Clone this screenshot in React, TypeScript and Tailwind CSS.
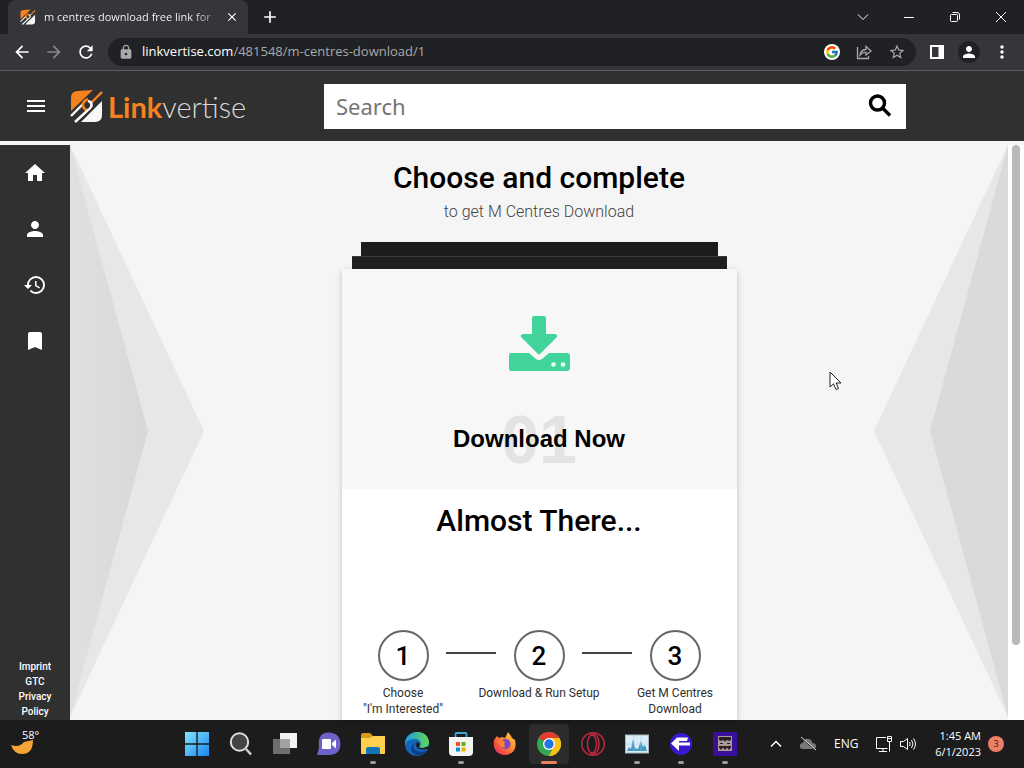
import React from 'react';
import {
  MdAdd, MdArrowBack, MdArrowForward, MdBookmark, MdClose, MdHistory, MdHome, MdLock,
  MdMenu, MdMoreVert, MdPerson, MdRefresh, MdStarBorder,
} from 'react-icons/md';
import { FcGoogle } from 'react-icons/fc';

const SIDE_LINKS = [
  { label: 'Home', Icon: MdHome },
  { label: 'Profile', Icon: MdPerson },
  { label: 'History', Icon: MdHistory },
  { label: 'Bookmarks', Icon: MdBookmark },
];

const LEGAL = ['Imprint', 'GTC', 'Privacy', 'Policy'];

const STEPS = [
  ['Choose', '"I\'m Interested"'],
  ['Download & Run Setup'],
  ['Get M Centres', 'Download'],
];

const LogoMark = ({ className }: { className?: string }) => (
  <svg viewBox="0 0 34 34" className={className} aria-hidden="true">
    <path d="M1 9 Q1 2 8 2 L23 1 L1 22 Z" fill="#f6821f" />
    <path d="M32 12 L32 26 Q32 33 25 33 L11 33 Z" fill="#f7f7f7" />
    <path d="M32 3 L20 15" stroke="#f6821f" strokeWidth="2.4" />
    <path d="M27 1 L17 10" stroke="#303030" strokeWidth="1.5" />
    <path d="M13 15 L1 27" stroke="#f7f7f7" strokeWidth="2.4" />
    <path d="M18 10 Q12 13 13 17 Q14 21 18 21" stroke="#f6821f" strokeWidth="2.6" fill="none" />
    <path d="M18 12 Q23 13 21 18 Q20 20 17 22 L5 33" stroke="#f7f7f7" strokeWidth="2.6" fill="none" />
    <path d="M23 19 L10 32" stroke="#303030" strokeWidth="1.5" />
  </svg>
);

const BrowserChrome = () => (
  <div className="shrink-0 bg-[#202124] text-white font-['Open_Sans',sans-serif]">
    <div className="flex h-[34px] items-center">
      <div className="ml-2 flex h-full w-60 items-center rounded-t-lg bg-[#35363a] pl-3 pr-2">
        <LogoMark className="h-4 w-4 shrink-0" />
        <span className="ml-2 flex-1 overflow-hidden whitespace-nowrap bg-linear-to-r from-white from-85% to-[#77787b] bg-clip-text text-[11px] text-transparent">
          m centres download free link for
        </span>
        <button aria-label="Close tab" className="ml-2 flex w-4 justify-center"><MdClose className="h-[14px] w-[14px]" /></button>
      </div>
      <button aria-label="New tab" className="ml-3"><MdAdd className="h-5 w-5" /></button>
      <div className="ml-auto flex h-7 items-center">
        <button aria-label="Search tabs" className="flex w-[46px] justify-center">
          <svg width="12" height="12" viewBox="0 0 12 12" fill="none" stroke="currentColor"><path d="M1 3.5 L6 8.5 L11 3.5" /></svg>
        </button>
        <button aria-label="Minimize" className="flex w-[46px] justify-center">
          <svg width="12" height="12" viewBox="0 0 12 12" stroke="currentColor"><path d="M1 6.5 H11" /></svg>
        </button>
        <button aria-label="Restore" className="flex w-[46px] justify-center">
          <svg width="12" height="12" viewBox="0 0 12 12" fill="none" stroke="currentColor">
            <rect x="1.5" y="3.5" width="7" height="7" rx="1" />
            <path d="M3.5 1.5 H8 Q10.5 1.5 10.5 4 V8.5" />
          </svg>
        </button>
        <button aria-label="Close" className="flex w-[46px] justify-center">
          <svg width="12" height="12" viewBox="0 0 12 12" fill="none" stroke="currentColor"><path d="M1 1 L11 11 M11 1 L1 11" /></svg>
        </button>
      </div>
    </div>
    <div className="flex h-[37px] items-center border-b border-[#5c5d60] bg-[#35363a] px-3">
      <button aria-label="Back"><MdArrowBack className="h-5 w-5" /></button>
      <button aria-label="Forward" className="ml-3 text-[#87888b]"><MdArrowForward className="h-5 w-5" /></button>
      <button aria-label="Reload" className="ml-3"><MdRefresh className="h-5 w-5" /></button>
      <div className="ml-3 flex h-7 flex-1 items-center rounded-full bg-[#202124] px-[10px] text-[#a8a9ac]">
        <MdLock className="h-4 w-4 shrink-0" />
        <span className="ml-2 flex-1 text-[13px]"><span className="text-white">linkvertise.com</span>/481548/m-centres-download/1</span>
        <span className="flex h-4 w-4 items-center justify-center rounded-full bg-white"><FcGoogle className="h-[14px] w-[14px]" /></span>
        <button aria-label="Share" className="ml-4">
          <svg width="16" height="16" viewBox="0 0 16 16" fill="none" stroke="currentColor" strokeWidth="1.3">
            <path d="M1.5 3 V14.5 H12.5 V12" />
            <path d="M4 11 Q4.500 6 10 5.500 V2.500 L15 7 L10 11 V8.500 Q6.500 8 4 11 Z" />
          </svg>
        </button>
        <button aria-label="Bookmark this page" className="ml-4"><MdStarBorder className="h-[18px] w-[18px]" /></button>
      </div>
      <button aria-label="Side panel" className="ml-[14px]">
        <svg width="14" height="14" viewBox="0 0 14 14"><path d="M1 1 H13 V13 H1 Z" fill="none" stroke="#fff" strokeWidth="2" /><path d="M8.500 1 H13 V13 H8.500 Z" fill="#fff" /></svg>
      </button>
      <button aria-label="Profile" className="ml-[14px] flex h-[22px] w-[22px] items-center justify-center rounded-full bg-[#202124]">
        <MdPerson className="h-[18px] w-[18px]" />
      </button>
      <button aria-label="Menu" className="ml-3"><MdMoreVert className="h-5 w-5" /></button>
    </div>
  </div>
);

const SiteHeader = () => (
  <header className="flex h-[70px] shrink-0 items-center bg-[#303030] pl-6">
    <button aria-label="Open navigation" className="text-white"><MdMenu className="h-6 w-6" /></button>
    <a href="#" className="ml-[22px] flex w-[254px] items-center font-['Lato',sans-serif] text-[29px] leading-8 text-[#d8d8d8]">
      <LogoMark className="mr-1 h-[34px] w-[34px]" />
      <span className="pt-[2px] font-bold text-[#f6821f]">Link</span>
      <span className="pt-[2px] font-light">vertise</span>
    </a>
    <form className="mr-[118px] flex h-[45px] flex-1 items-center bg-white" onSubmit={e => e.preventDefault()}>
      <input
        type="text"
        aria-label="Search"
        placeholder="Search"
        className="h-full min-w-0 flex-1 px-3 font-['Noto_Sans',sans-serif] text-[22px] text-black outline-none placeholder:text-[#757575]"
      />
      <button aria-label="Submit search" className="mr-[14px] text-black">
        <svg width="24" height="24" viewBox="0 0 24 24" fill="none" stroke="currentColor" strokeWidth="3.400">
          <circle cx="9.500" cy="9" r="7" />
          <path d="M14.500 14 L22 21.500" />
        </svg>
      </button>
    </form>
  </header>
);

const Sidebar = () => (
  <nav className="flex w-[70px] shrink-0 flex-col items-center bg-[#303030] pt-4 text-white">
    <div className="flex flex-col gap-8">
      {SIDE_LINKS.map(({ label, Icon }) => (
        <a key={label} href="#" aria-label={label}><Icon className="h-6 w-6" /></a>
      ))}
    </div>
    <div className="mt-auto flex flex-col items-center pb-[1px] text-[10px] font-medium leading-[15px]">
      {LEGAL.map(item => <a key={item} href="#">{item}</a>)}
    </div>
  </nav>
);

const Backdrop = () => (
  <div className="absolute inset-0 flex justify-between">
    <svg viewBox="0 0 134 575" preserveAspectRatio="none" className="h-full w-[134px]">
      <defs>
        <linearGradient id="fold" x1="0" x2="1" y1="0" y2="0">
          <stop offset="0" stopColor="#e0e0e0" />
          <stop offset="1" stopColor="#d8d8d8" />
        </linearGradient>
      </defs>
      <path d="M0 0 L134 286 L0 572 Z" fill="#e7e7e7" />
      <path d="M0 0 L78 286 L0 572 Z" fill="url(#fold)" />
    </svg>
    <svg viewBox="0 0 134 575" preserveAspectRatio="none" className="h-full w-[134px]">
      <path d="M134 0 L0 286 L134 572 Z" fill="#e7e7e7" />
      <path d="M134 0 L56 286 L134 572 Z" fill="#dadada" />
    </svg>
  </div>
);

const DownloadCard = () => (
  <div className="mt-[18px] flex w-[395px] flex-1 flex-col items-center">
    <div className="h-[14px] w-[357px] shrink-0 bg-[#1c1c1c]" />
    <div className="h-[13px] w-[375px] shrink-0 border-t border-[#3a3a3a] bg-[#1f1f1f]" />
    <div className="flex w-full flex-1 flex-col bg-white shadow-[0_2px_6px_rgba(0,0,0,0.22)]">
      <div className="flex h-[220px] flex-col items-center bg-[#f7f7f7] pt-[46px]">
        <svg width="62" height="57" viewBox="0 0 62 57" fill="#41d49b">
          <path d="M26 1 H36 Q38 1 38 3 V19 H47 Q51 20 48 23 L32 39 Q31 40 30 39 L14 23 Q11 20 15 19 H24 V3 Q24 1 26 1 Z" />
          <path d="M3 38 H21 L28 44 Q31 46 34 44 L41 38 H59 Q62 38 62 41 V53 Q62 56 59 56 H3 Q1 56 1 53 V41 Q1 38 3 38 Z" />
          <circle cx="45.500" cy="49.500" r="2.300" fill="#eafff6" />
          <circle cx="55" cy="49.500" r="2.300" fill="#eafff6" />
        </svg>
        <div className="mt-[31px] grid place-items-center font-['Liberation_Sans',sans-serif] font-bold">
          <span className="col-start-1 row-start-1 text-[68px] leading-[72px] text-[#e3e3e3]">01</span>
          <h2 className="relative col-start-1 row-start-1 text-2xl text-black">Download Now</h2>
        </div>
      </div>
      <h3 className="mt-3 text-center text-[30px] font-medium leading-10 text-black">Almost There...</h3>
      <ol className="mt-[89px] flex justify-center text-xs leading-4 text-[#303030]">
        {STEPS.map((lines, idx) => (
          <React.Fragment key={lines[0]}>
            {idx > 0 && <li aria-hidden="true" className="mt-[22px] h-[2px] w-[50px] bg-[#444]" />}
            <li className="flex w-[86px] flex-col items-center whitespace-nowrap">
              <span className="mb-1 flex h-[51px] w-[51px] items-center justify-center rounded-full border-2 border-[#666] text-[26px] font-medium text-black">
                {idx + 1}
              </span>
              {lines.map(line => <span key={line}>{line}</span>)}
            </li>
          </React.Fragment>
        ))}
      </ol>
    </div>
  </div>
);

const TASK_ICONS = [
  {
    name: 'Start',
    art: (
      <>
        <defs><linearGradient id="win" x1="0" y1="0" x2="1" y2="1"><stop stopColor="#83e4ff" /><stop offset="1" stopColor="#1688ee" /></linearGradient></defs>
        <path d="M0 0 H11.300 V11.300 H0 Z M12.700 0 H24 V11.300 H12.700 Z M0 12.700 H11.300 V24 H0 Z M12.700 12.700 H24 V24 H12.700 Z" fill="url(#win)" />
      </>
    ),
  },
  {
    name: 'Search',
    art: (
      <>
        <path d="M17 17 L22 22.500" stroke="#d0d0d0" strokeWidth="2.600" />
        <circle cx="10.500" cy="10" r="8.700" fill="#444" stroke="#dedede" strokeWidth="2" />
      </>
    ),
  },
  {
    name: 'Task view',
    art: (
      <>
        <rect x="7" y="1" width="17" height="15" fill="#f2f2f2" />
        <rect x="0" y="7" width="17" height="15" fill="#6e6e6e" />
        <rect x="7" y="7" width="10" height="9" fill="#a3a3a3" />
      </>
    ),
  },
  {
    name: 'Chat',
    art: (
      <>
        <path d="M0 23 L2 16 Q0 0 12 0.500 Q23 1 23.500 12 Q23 23 12 23 Z" fill="#6c62c7" />
        <rect x="5" y="7" width="9" height="10" rx="1" fill="#fff" />
        <path d="M15 11 L19 7.500 V16.500 L15 13 Z" fill="#fff" />
      </>
    ),
  },
  {
    name: 'File Explorer', running: true,
    art: (
      <>
        <path d="M0 3 Q0 1 2 1 H9 L12 4 H22 Q24 4 24 6 V20 H0 Z" fill="#d99a1c" />
        <path d="M0 6 H9 L12 4 H24 V21 Q24 22 23 22 H1 Q0 22 0 21 Z" fill="#ffd04d" />
        <path d="M5 22 V17 Q5 15 7 15 H17 Q19 15 19 17 V22 Z" fill="#1173b8" />
      </>
    ),
  },
  {
    name: 'Edge',
    art: (
      <>
        <defs><linearGradient id="edge" x1="0" x2="1"><stop stopColor="#2099e2" /><stop offset="1" stopColor="#61d856" /></linearGradient></defs>
        <circle cx="12" cy="12" r="12" fill="#1267bc" />
        <path d="M0 11 C1 -3 23 -4 24 10 C24 16 18 17 14 15 C18 11 14 7 10 7 C4 7 0 10 0 14 Z" fill="url(#edge)" />
        <path d="M11 10 C5 15 10 23 22 18.500 C19 23 14 24 11 23 C4 20 5 13 11 10 Z" fill="#0a3e87" />
        <path d="M12 10 C9 15 14 19 22 17 L24 17 C24 15 23 14 23 14 C19 17 14 16 14 15 C16 13 14 10 12 10 Z" fill="#1c1c1c" />
      </>
    ),
  },
  {
    name: 'Microsoft Store', running: true,
    art: (
      <>
        <path d="M6.500 6 V2 Q6.500 1 7.500 1 H16.500 Q17.500 1 17.500 2 V6" fill="none" stroke="#3ba7d9" strokeWidth="1.800" />
        <path d="M0 5 H24 V20 Q24 24 20 24 H4 Q0 24 0 20 Z" fill="#f3f3f3" />
        <path d="M7 10 H11 V14 H7 Z" fill="#f25022" /><path d="M12.500 10 H16.500 V14 H12.500 Z" fill="#6bad20" />
        <path d="M7 15.500 H11 V19.500 H7 Z" fill="#0094d8" /><path d="M12.500 15.500 H16.500 V19.500 H12.500 Z" fill="#f2ae00" />
      </>
    ),
  },
  {
    name: 'Firefox',
    art: (
      <>
        <defs><linearGradient id="fox" x1="1" y1="0" x2="0" y2="1"><stop stopColor="#ffe04a" /><stop offset=".5" stopColor="#ff7a2e" /><stop offset="1" stopColor="#e51d68" /></linearGradient></defs>
        <path d="M1 8 L4 4 L6 6 L9 5 L12 6 L15 0 L18 4 L19 6 L22 8 Q25 22 12 23 Q-1 22 1 8 Z" fill="url(#fox)" />
        <circle cx="12.500" cy="12" r="5" fill="#7747c8" />
        <path d="M5 9 L9 8 L12 10 Q10 13 13 15 Q7 17 5 9 Z" fill="#ff852d" />
      </>
    ),
  },
  {
    name: 'Chrome', active: true,
    art: (
      <>
        <circle cx="12" cy="12" r="12" fill="#34a853" />
        <path d="M12 12 L1.600 6 A12 12 0 0 1 22.400 6 Z" fill="#e53b30" />
        <path d="M12 12 L22.400 6 A12 12 0 0 1 12 24 L17 14 Z" fill="#fbc116" />
        <path d="M12 6 H22.400 L17 14 Z" fill="#fbc116" />
        <circle cx="12" cy="12" r="6" fill="#fff" /><circle cx="12" cy="12" r="4.700" fill="#2376e5" />
      </>
    ),
  },
  {
    name: 'Opera',
    art: (
      <g fill="none" stroke="#c22745">
        <circle cx="12" cy="12" r="11.300" strokeWidth="1.400" />
        <ellipse cx="11" cy="12" rx="4.500" ry="9" strokeWidth="1.400" />
        <path d="M9 2 Q18 1 18 12 Q18 23 9 22" strokeWidth="1.400" />
      </g>
    ),
  },
  {
    name: 'Task Manager', running: true,
    art: (
      <>
        <rect x="0.500" y="3" width="23" height="18" fill="#d9edf6" stroke="#aab7be" />
        <path d="M2 19 L4 15 L6 17 L8 7 L10 16 L13 17 L16 9 L18 15 L20 13 L22 19 Z" fill="#4598bd" />
        <path d="M1 12 H23 M9 3 V21 M16 3 V21" stroke="#a2cbdc" strokeWidth=".5" />
      </>
    ),
  },
  {
    name: 'FileZilla', running: true,
    art: (
      <>
        <circle cx="12" cy="12" r="11" fill="#3b18cb" />
        <path d="M2 11.500 L8 5.500 H19 L18 9 H10 V10.500 H21 V13.500 H10 V19 Z" fill="#fff" />
      </>
    ),
  },
  {
    name: 'Game', running: true,
    art: (
      <>
        <rect x="0" y="0" width="24" height="24" fill="#39109a" />
        <rect x="5" y="4" width="14" height="15" fill="#a99a96" />
        <path d="M6 5 H18 V8 L16 9 L14 8 L12 9.500 L10 8 L8 9 L6 8 Z M7 11 H10 V12 H7 Z M14 11 H17 V12 H14 Z M6 14 H18 V15.500 L16 18 L14 15.500 L12 18 L10 15.500 L8 18 L6 15.500 Z" fill="#2a2025" />
      </>
    ),
  },
];

const Taskbar = () => (
  <footer className="flex h-12 shrink-0 items-center bg-[#1c1c1c] font-['Open_Sans',sans-serif] text-white">
    <div className="w-[175px] shrink-0 pl-[11px]">
      <button aria-label="Weather" className="relative block h-8 w-8">
        <svg viewBox="0 0 32 32" className="h-8 w-8"><path d="M0 17 Q8 20 13 14 L22 12 Q22 26 11 26 Q3 26 0 17 Z" fill="#f6a338" /></svg>
        <span className="absolute left-[11px] top-[1px] text-[11px] leading-3">58°</span>
      </button>
    </div>
    {TASK_ICONS.map(({ name, art, running, active }) => (
      <div key={name} className="flex w-11 shrink-0 justify-center">
        <button aria-label={name} className={active ? 'flex h-10 w-10 flex-col items-center rounded bg-[#2c2c2c] pt-2' : 'flex h-10 w-10 flex-col items-center pt-2'}>
          <svg width="24" height="24" viewBox="0 0 24 24">{art}</svg>
          {running && <span className="mt-[5px] h-[3px] w-[6px] rounded-full bg-[#9c9c9c]" />}
          {active && <span className="mt-[5px] h-[3px] w-4 rounded-full bg-[#ee8062]" />}
        </button>
      </div>
    ))}
    <div className="ml-auto flex items-center pr-5">
      <button aria-label="Show hidden icons">
        <svg width="12" height="12" viewBox="0 0 12 12" fill="none" stroke="#fff" strokeWidth="1.500"><path d="M1 8.500 L6 3.500 L11 8.500" /></svg>
      </button>
      <svg width="18" height="16" viewBox="0 0 18 16" className="ml-[17px]">
        <path d="M4 13 Q0 13 1 9 Q1 7 4 7 Q5 2 9 3 Q13 3 13 7 Q17 7 17 10 Q17 13 14 13 Z" fill="#77797b" />
        <path d="M1 1 L16 14" stroke="#1c1c1c" strokeWidth="1" /><path d="M2 1 L17 14" stroke="#ddd" />
      </svg>
      <span className="ml-[17px] w-6 text-center text-xs">ENG</span>
      <svg width="18" height="18" viewBox="0 0 18 18" className="ml-[17px]" fill="none" stroke="#fff">
        <path d="M11 2.500 H1.500 V13.500 H12.500 M4 16.500 H12 M8 13.500 V16.500 M14.500 6.500 V16.500 M12.500 1.500 H16.500 V6.500 H12.500 Z M12.500 3.500 H16.500" />
      </svg>
      <svg width="18" height="16" viewBox="0 0 18 16" className="ml-[6px]" fill="none" stroke="#fff">
        <path d="M1.500 5.500 H4.500 L8.500 2.500 V13.500 L4.500 10.500 H1.500 Z M10.500 6 Q12 8 10.500 10 M12.500 4 Q15.500 8 12.500 12 M14.500 2.500 Q18.500 8 14.500 13.500" />
      </svg>
      <div className="ml-[11px] flex w-[53px] flex-col items-end whitespace-nowrap text-[11px] leading-4">
        <span>1:45 AM</span>
        <span>6/1/2023</span>
      </div>
      <span className="ml-[7px] flex h-4 w-4 items-center justify-center rounded-full bg-[#ed7f64] text-[9px] text-[#33201b]">3</span>
    </div>
  </footer>
);

export default function App() {
  return (
    <div className="relative flex h-screen flex-col overflow-hidden bg-[#f5f5f5] font-['Roboto',sans-serif]">
      <BrowserChrome />
      <SiteHeader />
      <div className="flex min-h-0 flex-1 pt-1">
        <Sidebar />
        <main className="relative flex min-w-0 flex-1 flex-col">
          <Backdrop />
          <div className="relative flex flex-1 flex-col items-center pt-[13px]">
            <h1 className="text-[30px] font-medium leading-10 text-black">Choose and complete</h1>
            <p className="mt-[2px] text-base font-light leading-6 text-[#444]">to get M Centres Download</p>
            <DownloadCard />
          </div>
        </main>
        <div className="w-4 shrink-0 bg-white px-1">
          <div className="h-[87%] w-2 rounded-full bg-[#bababa]" />
        </div>
      </div>
      <Taskbar />
      <svg width="14" height="21" viewBox="0 0 14 21" className="absolute left-[81%] top-[371px]">
        <path d="M1 1 V16 L4.500 12.800 L7 18.500 L9.500 17.500 L7.200 12 H12 Z" fill="#fff" stroke="#222" />
      </svg>
    </div>
  );
}
